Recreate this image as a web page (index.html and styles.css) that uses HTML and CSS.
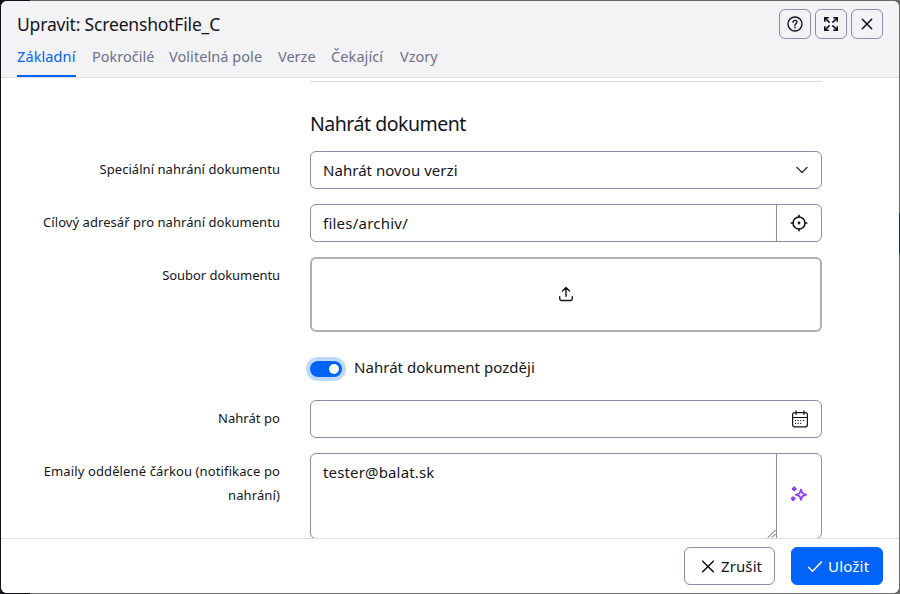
FILE: index.html
```html
<!DOCTYPE html>
<html lang="cs">
<head>
<meta charset="utf-8">
<title>Upravit</title>
<link rel="stylesheet" href="styles.css">
</head>
<body>
<div class="backdrop">
<div class="modal">
  <header class="header">
    <div class="title-row">
      <h1 class="title">Upravit: ScreenshotFile_C</h1>
      <div class="tools">
        <button class="tool" aria-label="Nápověda"><svg width="16" height="16" viewBox="0 0 16 16" fill="none" stroke="#13151b" stroke-width="1.4" stroke-linecap="round"><circle cx="8" cy="8" r="7"/><path d="M6 6.3C6.1 3.7 10 3.8 10 6.1c0 1.6-2 1.5-2 3.1"/><circle cx="8" cy="11.6" r=".3"/></svg></button>
        <button class="tool" aria-label="Zvětšit"><svg width="16" height="16" viewBox="0 0 16 16" fill="none" stroke="#13151b" stroke-width="1.6"><path d="M6.6 6.6 2.5 2.5M9.4 6.6l4.1-4.1M6.6 9.4l-4.1 4.1M9.4 9.4l4.1 4.1M1.8 5.8v-4h4M10.2 1.8h4v4M1.8 10.2v4h4M10.2 14.2h4v-4"/></svg></button>
        <button class="tool" aria-label="Zavřít"><svg width="16" height="16" viewBox="0 0 16 16" fill="none" stroke="#13151b" stroke-width="1.6" stroke-linecap="round"><path d="m3.3 3.3 9.4 9.4M12.7 3.3l-9.4 9.4"/></svg></button>
      </div>
    </div>
    <nav class="tabs">
      <a class="tab active w-zak">Základní</a>
      <a class="tab w-pok">Pokročilé</a>
      <a class="tab w-vol">Volitelná pole</a>
      <a class="tab w-ver">Verze</a>
      <a class="tab w-cek">Čekající</a>
      <a class="tab w-vzo">Vzory</a>
    </nav>
  </header>
  <main class="content">
    <hr class="rule">
    <h2 class="section">Nahrát dokument</h2>
    <div class="row">
      <div class="label">Speciální nahrání dokumentu</div>
      <div class="control select"><span class="value">Nahrát novou verzi</span><svg width="12" height="8" viewBox="0 0 12 8" fill="none" stroke="#343a40" stroke-width="1.5" stroke-linecap="round" stroke-linejoin="round"><path d="m1 1.500 5 5 5-5"/></svg></div>
    </div>
    <div class="row">
      <div class="label">Cílový adresář pro nahrání dokumentu</div>
      <div class="control"><span class="value path">files/archiv/</span><span class="addon"><svg width="18" height="18" viewBox="0 0 18 18" fill="none" stroke="#13151b" stroke-width="1.6" stroke-linecap="round"><circle cx="9" cy="9" r="6"/><path d="M9 1.200V3M9 15v1.800M1.200 9H3M15 9h1.800"/><circle cx="9" cy="9" r=".6"/></svg></span></div>
    </div>
    <div class="row">
      <div class="label file">Soubor dokumentu</div>
      <div class="upload"><svg width="16" height="16" viewBox="0 0 16 16" fill="none" stroke="#13151b" stroke-width="1.4" stroke-linecap="round" stroke-linejoin="round"><path d="M8 10.300V1.800M4.500 5 8 1.500 11.500 5M1.700 10.800v2q0 1.700 1.700 1.700h9.200q1.700 0 1.700-1.700v-2"/></svg></div>
    </div>
    <div class="row later">
      <div class="label"></div>
      <div class="switch-line"><span class="switch"><span class="knob"></span></span><span class="switch-text">Nahrát dokument později</span></div>
    </div>
    <div class="row">
      <div class="label">Nahrát po</div>
      <div class="control date"><svg width="18" height="18" viewBox="0 0 18 18" fill="none" stroke="#13151b" stroke-width="1.2" stroke-linecap="round"><rect x="1.600" y="2.600" width="14.800" height="14.200" rx="2"/><path d="M1.600 7.500h14.800M5 .8v3.500M13 .8v3.500"/><path stroke-width="1.100" stroke-linecap="butt" stroke-dasharray="1.100 1.500" d="M4 10.500h10M4 13.400h7.500"/></svg></div>
    </div>
    <div class="row">
      <div class="label emails">Emaily oddělené čárkou (notifikace po nahrání)</div>
      <div class="control area"><span class="value mail">tester@balat.sk</span><svg class="grip" width="9" height="9" viewBox="0 0 9 9" fill="none" stroke="#444" stroke-width=".9"><path d="M1 8.500 8.500 1M5 8.500 8.500 5"/></svg><span class="addon ai"><svg width="18" height="16" viewBox="0 0 18 16" fill="none" stroke="#8a3ffc" stroke-width="1.700" stroke-linejoin="round"><path d="M11 3.500 12.400 7.300 16.200 8.700 12.400 10.100 11 13.900 9.600 10.100 5.800 8.700 9.600 7.300Z"/><path stroke-width="2.200" d="M4.200.6v4.600M1.900 2.900h4.600M3.200 10.400v4.600M.9 12.700h4.600"/></svg></span></div>
    </div>
  </main>
  <footer class="footer">
    <button class="btn cancel"><svg width="16" height="16" viewBox="0 0 16 16" fill="none" stroke="#13151b" stroke-width="1.600" stroke-linecap="round"><path d="m2.700 3.200 10.600 10.600M13.300 3.200 2.700 13.800"/></svg><span>Zrušit</span></button>
    <button class="btn save"><svg width="16" height="16" viewBox="0 0 16 16" fill="none" stroke="#fff" stroke-width="1.500" stroke-linecap="round" stroke-linejoin="round"><path d="m1.500 9.200 4 4L14.500 4"/></svg><span>Uložit</span></button>
  </footer>
</div>
</div>
</body>
</html>
```
FILE: styles.css
```css
* { box-sizing: border-box; }
body { margin: 0; font-family: "Noto Sans", sans-serif; color: #13151b; }
.backdrop {
  width: 900px; height: 594px; padding: 1px; overflow: hidden;
  background:
    linear-gradient(#002b69, #002b69) 899px 213px / 1px 40px no-repeat,
    linear-gradient(90deg, #13121c 30px, #6b6b6c 30px);
}
.modal { display: flex; flex-direction: column; width: 898px; height: 592px; background: #fff; border-radius: 6px; overflow: hidden; }
.header { flex: none; height: 77px; background: #f3f3f6; border-bottom: 1px solid #dcdde1; padding: 0 16px; }
.title-row { display: flex; justify-content: space-between; height: 45px; padding-top: 8px; }
.title { margin: 0; font-size: 17.5px; line-height: 30px; font-weight: 400; letter-spacing: -.18px; white-space: nowrap; }
.tools { display: flex; gap: 4px; }
.tool { display: flex; align-items: center; justify-content: center; width: 32px; height: 30px; padding: 0; background: transparent; border: 1px solid #868ea8; border-radius: 6px; }
.tabs { display: flex; gap: 16px; height: 31px; }
.tab { flex: none; font-size: 14.5px; line-height: 20px; color: #6c7188; white-space: nowrap; }
.active { color: #0063fb; border-bottom: 2px solid #0063fb; }
.w-zak { width: 59px; letter-spacing: .1px; } .w-pok { width: 61px; } .w-vol { width: 93px; letter-spacing: .06px; }
.w-ver { width: 37px; } .w-cek { width: 53px; letter-spacing: .1px; } .w-vzo { width: 38px; }
.content { flex: 1; min-height: 0; overflow: hidden; padding: 3px 77px 0 24px; }
.rule { width: 512px; height: 1px; margin: 0 0 0 auto; border: 0; background: #dcdde1; }
.section { margin: 27px 0 13px 285px; font-size: 19.5px; line-height: 29px; font-weight: 400; letter-spacing: -.48px; }
.row { display: grid; grid-template-columns: 255px 512px; column-gap: 30px; margin-bottom: 15px; }
.label { padding-top: 6px; font-size: 13px; line-height: 24px; text-align: right; letter-spacing: .05px; }
.file { letter-spacing: -.06px; }
.emails { letter-spacing: .12px; }
.control { display: flex; height: 38px; border: 1px solid #868ea8; border-radius: 6px; }
.value { flex: 1; padding-left: 12px; font-size: 15px; line-height: 37px; white-space: nowrap; letter-spacing: .04px; }
.path { letter-spacing: .23px; }
.mail { letter-spacing: .15px; }
.select { align-items: center; padding-right: 13px; }
.addon { display: flex; align-items: center; justify-content: center; width: 45px; padding-bottom: 1px; border-left: 1px solid #868ea8; }
.ai { padding-bottom: 4px; }
.upload { display: flex; align-items: center; justify-content: center; height: 75px; padding-bottom: 1px; border: 2px solid #b0b0b0; border-radius: 6px; }
.later { margin: 25px 0 19px; height: 24px; }
.switch-line { display: flex; align-items: center; }
.switch { display: flex; align-items: center; justify-content: flex-end; width: 32px; height: 16px; padding-right: 3px; border-radius: 8px; background: #0063fb; box-shadow: 0 0 0 4px #bfd8fe; }
.knob { width: 10px; height: 10px; border-radius: 50%; background: #fff; }
.switch-text { margin-left: 12px; font-size: 15px; line-height: 20px; margin-top: -4px; letter-spacing: .04px; }
.date { align-items: center; justify-content: flex-end; padding-right: 12px; }
.area { height: 86px; }
.grip { align-self: flex-end; }
.footer { flex: none; display: flex; justify-content: flex-end; gap: 16px; height: 55px; padding: 8px 16px; border-top: 1px solid #dcdde1; background: #fff; }
.btn { display: flex; align-items: center; height: 38px; padding: 0 0 0 15px; border: 1px solid #868ea8; border-radius: 6px; background: #fff; color: #13151b; font: 15px "Noto Sans", sans-serif; gap: 5px; }
.cancel { width: 91px; letter-spacing: .1px; }
.save { width: 92px; background: #0063fb; border-color: #0063fb; color: #fff; letter-spacing: .2px; }
```
